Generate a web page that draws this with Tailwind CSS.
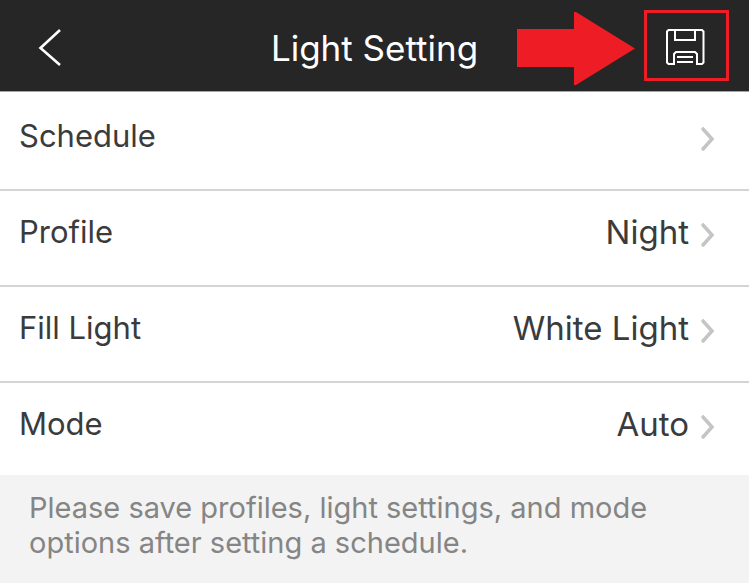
<!DOCTYPE html>
<html lang="en">
<head>
    <meta charset="utf-8">
    <meta name="viewport" content="width=device-width, initial-scale=1">
    <title>Light Setting</title>
    <script src="https://cdn.jsdelivr.net/npm/@tailwindcss/browser@4"></script>
</head>
<body class="min-h-screen flex flex-col bg-[#f3f3f3] text-[#3b3b3b] font-[Inter,sans-serif]">
    <header class="grid grid-cols-[1fr_auto_1fr] items-center pt-[10px] pb-[6px] bg-[#262626] text-white border-b border-[#a3a3a3]">
        <button type="button" aria-label="Back" class="justify-self-start pl-9">
            <svg class="w-7 h-10" viewBox="0 0 28 40" fill="none" stroke="currentColor" stroke-width="2.6">
                <path d="M24 2L4.5 20L24 37"/>
            </svg>
        </button>
        <h1 class="text-[35px] leading-10">Light Setting</h1>
        <div class="flex items-start justify-end gap-2 pr-5">
            <!-- callout pointing at the save button -->
            <svg class="w-[119px] h-[75px]" viewBox="0 0 119 75" fill="#ee1c24">
                <path d="M0 19H57V2H59L118 38.5L59 75H57V57H0Z"/>
            </svg>
            <button type="button" aria-label="Save" class="flex items-center justify-center w-[85px] h-[71px] border-3 border-[#ee1c24]">
                <svg class="w-[41px] h-[39px]" viewBox="0 0 41 39" fill="none" stroke="currentColor" stroke-width="2">
                    <path d="M2.5 4H36L37.5 5.5V36.5L36 38H31V28L29 26H10L8 28V38H2.5L1 36.5V5.5Z"/>
                    <path d="M9 4V14H29V4M11 31H27M11 36H27"/>
                </svg>
            </button>
        </div>
    </header>
    <main>
        <ul class="pt-[3px] bg-white">
            <li class="border-b-2 border-[#d4d4d4]">
                <a href="#schedule" class="flex items-center pl-[19px] pr-8 pt-[21px] pb-[33px] leading-10">
                    <span class="flex-1 text-[31px]">Schedule</span>
                    <svg class="w-5 h-8 mt-1.5" viewBox="0 0 20 32" fill="none" stroke="#c5c5c7" stroke-width="3.6" stroke-linecap="round"><path d="M6 6L15 16L6 26"/></svg>
                </a>
            </li>
            <li class="border-b-2 border-[#d4d4d4]">
                <a href="#profile" class="flex items-center pl-[19px] pr-8 pt-[21px] pb-[33px] leading-10">
                    <span class="flex-1 text-[31px]">Profile</span>
                    <span class="pr-2 text-[33px]">Night</span>
                    <svg class="w-5 h-8 mt-1.5" viewBox="0 0 20 32" fill="none" stroke="#c5c5c7" stroke-width="3.6" stroke-linecap="round"><path d="M6 6L15 16L6 26"/></svg>
                </a>
            </li>
            <li class="border-b-2 border-[#d4d4d4]">
                <a href="#fill-light" class="flex items-center pl-[19px] pr-8 pt-[21px] pb-[33px] leading-10">
                    <span class="flex-1 text-[31px]">Fill Light</span>
                    <span class="pr-2 text-[33px]">White Light</span>
                    <svg class="w-5 h-8 mt-1.5" viewBox="0 0 20 32" fill="none" stroke="#c5c5c7" stroke-width="3.6" stroke-linecap="round"><path d="M6 6L15 16L6 26"/></svg>
                </a>
            </li>
            <li>
                <a href="#mode" class="flex items-center pl-[19px] pr-8 pt-[21px] pb-[31px] leading-10">
                    <span class="flex-1 text-[31px]">Mode</span>
                    <span class="pr-2 text-[33px]">Auto</span>
                    <svg class="w-5 h-8 mt-1.5" viewBox="0 0 20 32" fill="none" stroke="#c5c5c7" stroke-width="3.6" stroke-linecap="round"><path d="M6 6L15 16L6 26"/></svg>
                </a>
            </li>
        </ul>
        <p class="px-[29px] pt-[15px] text-[29px] leading-[35px] text-[#858585]">Please save profiles, light settings, and mode options after setting a schedule.</p>
    </main>
</body>
</html>
